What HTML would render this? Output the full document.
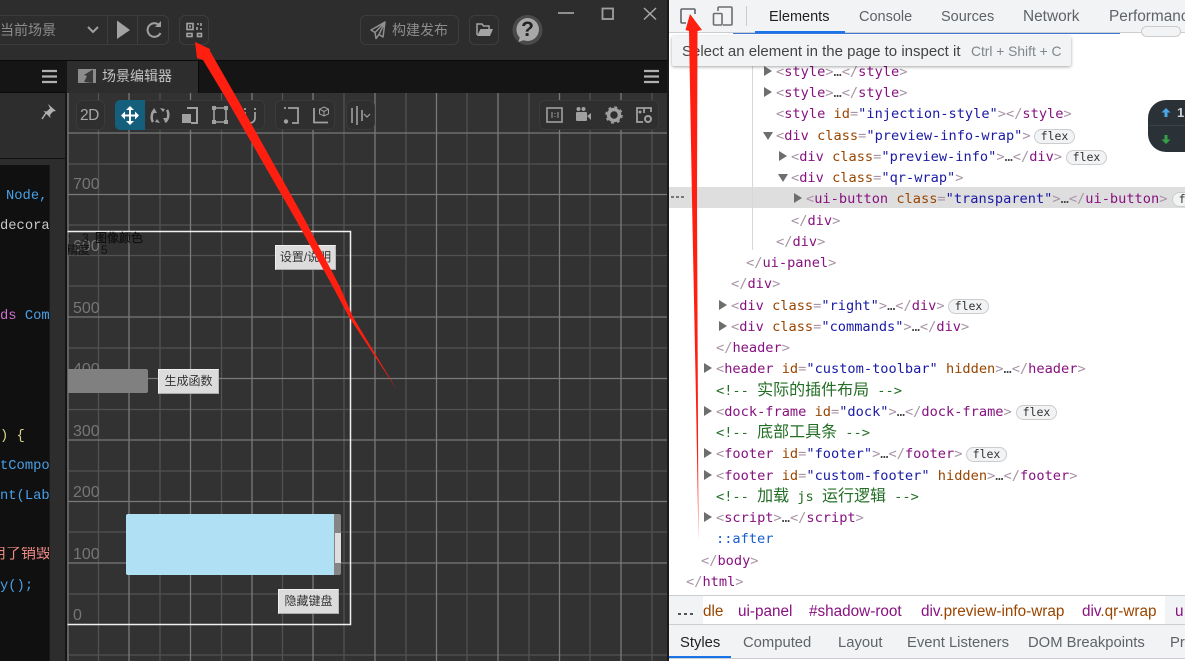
<!DOCTYPE html>
<html lang="zh"><head><meta charset="utf-8"><title>场景编辑器</title>
<style>
html,body{margin:0;padding:0;width:1185px;height:661px;overflow:hidden;background:#fff}
body{position:relative;font-family:"Liberation Sans","Noto Sans CJK SC",sans-serif}
.p{position:absolute;box-sizing:border-box}
.btn{position:absolute;box-sizing:border-box;border:1px solid #3d3d3d;border-radius:6px}
.lab{position:absolute;left:73px;font-size:16px;line-height:18px;color:#767676;margin-top:2px}
.wb{position:absolute;box-sizing:border-box;background:#dcdcdc;border:1px solid #eee;border-right-color:#bbb;border-bottom-color:#aaa;color:#333;font-size:12px;line-height:23px;text-align:center;height:25px;width:61px}
.code{position:absolute;left:0;width:49px;overflow:hidden;white-space:pre;font:13.8px/16px "Liberation Mono","Noto Sans CJK SC",monospace;color:#4a9fe6;margin-top:2px}
.l{position:absolute;white-space:pre;font:13.65px/21px "DejaVu Sans Mono","Noto Sans CJK SC",monospace;color:#881280;height:21px;margin-top:1px}
.l b{font-weight:400;color:#a894a6}.l i{font-style:normal;color:#994500}.l u{text-decoration:none;color:#1a1aa6}.l s{text-decoration:none;color:#236e25}
.l em{font-style:normal;font-size:16px;line-height:1}.l q{quotes:none;color:#444}
.f{display:inline-block;box-sizing:border-box;position:absolute;height:15px;width:41px;border:1px solid #ccc;border-radius:8px;background:#f1f3f4;color:#333;font:11.5px/13px "DejaVu Sans Mono",monospace;text-align:center;margin-top:1px}
.tw{position:absolute;width:0;height:0;border-style:solid;border-color:transparent;margin-top:1px}
.r{border-width:5px 0 5px 8px;border-left-color:#6e6e6e}
.d{border-width:8px 5px 0 5px;border-top-color:#6e6e6e}
.tab{position:absolute;font-size:14.5px;line-height:18px;color:#5f6368;white-space:pre}
.bc{font-size:15.3px;margin-top:1px}
.lt{font-size:14.8px;margin-top:1px}
</style></head><body>

<!-- left dark app -->
<div class="p" style="left:0;top:0;width:668px;height:661px;background:#2d2d2d"></div>
<div class="p" style="left:0;top:60px;width:667px;height:1px;background:#0a0a0a"></div>
<div class="p" style="left:0;top:61px;width:667px;height:32px;background:#151515"></div>
<div class="p" style="left:67px;top:61px;width:132px;height:32px;background:#2d2d2d;border-right:1px solid #0a0a0a"></div>
<div class="p" style="left:65px;top:61px;width:2px;height:600px;background:#161616"></div>
<div class="p" style="left:0;top:92px;width:66px;height:1px;background:#0a0a0a"></div>
<div class="p" style="left:0;top:158px;width:65px;height:1px;background:#111"></div>
<div class="p" style="left:0;top:165px;width:50px;height:496px;background:#101010;border-right:1px solid #1a1a1a"></div>

<!-- top toolbar -->
<div class="btn" style="left:-10px;top:15px;width:179px;height:30px"></div>
<div class="p" style="left:107px;top:15px;width:1px;height:30px;background:#3d3d3d"></div>
<div class="p" style="left:137px;top:15px;width:1px;height:30px;background:#3d3d3d"></div>
<div class="p" style="left:0;top:20px;font-size:14px;line-height:20px;color:#8c8c8c;white-space:pre">当前场景</div>
<svg class="p" style="left:0;top:0" width="668" height="60" fill="none">
<path d="M88 27l5 5 5-5" stroke="#a0a0a0" stroke-width="2"/>
<path d="M117 20.500L130 30L117 39Z" fill="#a3a3a3"/>
<path d="M159.500 25.500A6.800 6.800 0 1 0 160.500 33" stroke="#a0a0a0" stroke-width="2"/><path d="M161 21v6h-6z" fill="#a0a0a0"/>
<g stroke="#a3a3a3" stroke-width="1.600">
<rect x="187" y="23.500" width="6" height="6"/>
<path d="M197 24h2M201 23v3M197 27v3M200 29h2"/>
<rect x="187" y="33.500" width="5" height="3"/>
<rect x="197.500" y="33.500" width="4" height="3"/>
</g>
<rect x="189" y="25.500" width="2" height="2" fill="#a3a3a3"/>
<path d="M385 22L371 30l4 2.500 1 6 3-4 4 2.500zM375 32.500L385 22l-6 12.500" stroke="#8f8f8f" stroke-width="1.500" stroke-linejoin="round"/>
<path d="M477 35V24h5l1.500 2h5.500v3" stroke="#a3a3a3" stroke-width="1.500"/><path d="M477 36l3.500-7H493l-3 7z" fill="#a3a3a3"/>
<circle cx="527.500" cy="30" r="15" fill="#4a4a4a"/>
<path d="M527.500 18a11.500 11.500 0 1 1-4 22.300l-5 1.700 1.200-4.500A11.500 11.500 0 0 1 527.500 18z" fill="#a8a8a8"/>
<path d="M558 13h16" stroke="#8f8f8f" stroke-width="2"/>
<rect x="602.500" y="8.500" width="10.500" height="10.500" stroke="#a0a0a0" stroke-width="1.800"/>
<path d="M644 8l12 11.500M656 8L644 19.500" stroke="#a8a8a8" stroke-width="1.500"/>
</svg>
<div class="p" style="left:520px;top:18px;width:15px;text-align:center;font-size:21px;line-height:24px;font-weight:700;color:#222">?</div>
<div class="btn" style="left:179px;top:15px;width:30px;height:30px"></div>
<div class="btn" style="left:360px;top:15px;width:99px;height:30px"></div>
<div class="p" style="left:392px;top:20px;font-size:14px;line-height:20px;color:#8c8c8c;white-space:pre">构建发布</div>
<div class="btn" style="left:469px;top:15px;width:30px;height:30px"></div>

<!-- tabs -->
<svg class="p" style="left:0;top:60px" width="668" height="35" fill="none">
<path d="M42 11h15M42 16.500h15M42 22h15M644 11h15M644 16.500h15M644 22h15" stroke="#b0b0b0" stroke-width="2.200"/>
<rect x="78" y="9" width="18" height="14" fill="#8c8c8c"/><path d="M84 22l3-6-3-1 8-5 1 0v13z" fill="#3a3a3a"/>
</svg>
<div class="p" style="left:102px;top:67px;font-size:14px;line-height:18px;color:#c4c4c4;white-space:pre">场景编辑器</div>

<!-- scene grid -->
<div class="p" style="left:67px;top:93px;width:600px;height:568px;background:#323232;overflow:hidden"></div>
<svg class="p" style="left:0;top:0" width="668" height="661" fill="none">
<g stroke="#525252" stroke-width="1.300">
<path d="M98.500 93V661M160 93V661M221.500 93V661M282.500 93V661M344 93V661M406 93V661M467 93V661M529 93V661M590 93V661M652 93V661"/>
<path d="M68 164H667M68 225H667M68 255.500H667M68 286H667M68 348H667M68 409.500H667M68 471H667M68 532H667M68 594H667M68 655H667"/>
</g>
<g stroke="#7a7a7a" stroke-width="1.300">
<path d="M68 93V661M129 93V661M190.500 93V661M252 93V661M313 93V661M375 93V661M436.500 93V661M498 93V661M559.500 93V661M621 93V661"/>
<path d="M68 133H667M68 194.500H667M68 317H667M68 378.500H667M68 440H667M68 501.500H667M68 563H667"/>
</g>
<path d="M67.500 231.500H350.500V624.500H67.500" stroke="#f0f0f0" stroke-width="1.500"/>
</svg>
<div class="lab" style="top:174px">700</div>
<div class="lab" style="top:236px">600</div>
<div class="lab" style="top:298px">500</div>
<div class="lab" style="top:359px">400</div>
<div class="lab" style="top:421px">300</div>
<div class="lab" style="top:482px">200</div>
<div class="lab" style="top:544px">100</div>
<div class="lab" style="top:605px">0</div>

<div class="p" style="left:68px;top:231px;font-size:12px;line-height:14px;color:#111;white-space:pre">:</div>
<div class="p" style="left:82px;top:231px;font-size:12px;line-height:14px;color:#111;white-space:pre">3</div>
<div class="p" style="left:95px;top:231px;font-size:12px;line-height:14px;color:#111;white-space:pre;-webkit-text-stroke:.3px #111">图像颜色</div>
<div class="p" style="left:68px;top:243px;width:24px;overflow:hidden;font-size:12px;line-height:14px;color:#111;white-space:pre"><span style="margin-left:-2px">精度：</span></div>
<div class="p" style="left:101px;top:243px;font-size:12px;line-height:14px;color:#111;white-space:pre">5</div>

<div class="p" style="left:68px;top:369px;width:80px;height:24px;background:#808080;border-radius:0 2px 2px 0"></div>
<div class="wb" style="left:158px;top:369px">生成函数</div>
<div class="wb" style="left:275px;top:245px">设置/说明</div>
<div class="wb" style="left:278px;top:589px">隐藏键盘</div>
<div class="p" style="left:126px;top:514px;width:208px;height:61px;background:#b0e0f3;border-radius:2px 0 0 2px"></div>
<div class="p" style="left:334px;top:514px;width:7px;height:61px;background:#858585;border-radius:0 2px 2px 0"></div>
<div class="p" style="left:335px;top:533px;width:6px;height:30px;background:#dedede"></div>

<!-- scene toolbar -->
<div class="p" style="left:76px;top:100px;width:29px;height:30px;background:#2f2f2f;border:1px solid #3a3a3a;border-radius:6px"></div>
<div class="p" style="left:115px;top:100px;width:150px;height:30px;background:#2f2f2f;border:1px solid #3a3a3a;border-radius:6px"></div>
<div class="p" style="left:115px;top:100px;width:30px;height:30px;background:#14607c;border-radius:5px 0 0 5px"></div>
<div class="p" style="left:275px;top:100px;width:60px;height:30px;background:#2f2f2f;border:1px solid #3a3a3a;border-radius:6px"></div>
<div class="p" style="left:346px;top:100px;width:29px;height:30px;background:#2f2f2f;border:1px solid #3a3a3a;border-radius:6px"></div>
<div class="p" style="left:539px;top:100px;width:120px;height:30px;background:#2f2f2f;border:1px solid #3a3a3a;border-radius:6px"></div>
<div class="p" style="left:80px;top:106px;font-size:15.5px;line-height:20px;letter-spacing:-.5px;color:#a8a8a8">2D</div>
<svg class="p" style="left:0;top:97px" width="668" height="41" fill="none">
<g fill="#fff" transform="translate(1,0)"><path d="M129 9l-4 4h8zM129 28l-4-4h8zM120 18.500l4-4v8zM138 18.500l-4-4v8z"/><path d="M121 17.500h16v2h-16z"/><path d="M128 11h2v15h-2z"/></g>
<path d="M153 25c-2-3-2-9 2-12M167 13c2 3 2 9-2 12" stroke="#a0a0a0" stroke-width="2.500"/><path d="M151 16l3-5 3 5zM169 21l-3 5-3-5zM160 11l5 1-2 3zM160 26l-5-1 2-3z" fill="#a0a0a0"/>
<path d="M187 11h10v15h-6" stroke="#a0a0a0" stroke-width="2"/><rect x="182" y="17" width="9" height="9" fill="#a0a0a0"/>
<path d="M214 11h12M214 25h12M214 11v14M226 11v14" stroke="#a0a0a0" stroke-width="1.600"/><path d="M212 9h4v4h-4zM224 9h4v4h-4zM212 23h4v4h-4zM224 23h4v4h-4z" fill="#a0a0a0"/>
<path d="M245 15v6a5 5 0 0 0 10 0v-6" stroke="#a0a0a0" stroke-width="1.800"/><path d="M245 11v2M255 11v2" stroke="#a0a0a0" stroke-width="1.800"/>
<path d="M288 11h10v15h-6" stroke="#a0a0a0" stroke-width="1.800"/><path d="M284 11h2" stroke="#a0a0a0" stroke-width="1.800"/><circle cx="286" cy="24.500" r="2.200" fill="#a0a0a0"/>
<path d="M314 11v14.500h14" stroke="#a0a0a0" stroke-width="1.800"/><path d="M324 10l4.500 2.200v4.600l-4.500 2.200-4.500-2.200v-4.600zM319.500 12.200l4.500 2.300 4.500-2.300M324 14.500v4.500" stroke="#a0a0a0" stroke-width="1"/>
<path d="M352 11v15M357 9v19M362 13v11" stroke="#a0a0a0" stroke-width="1.600"/><path d="M364 17l3 3 3-3" stroke="#a0a0a0" stroke-width="1.200"/>
<rect x="547" y="11" width="15" height="14" stroke="#a0a0a0" stroke-width="1.600"/><path d="M552 15v6M558 15v6M555 16v1M555 19v1" stroke="#a0a0a0"/>
<rect x="576" y="15" width="11" height="9" rx="1" fill="#a0a0a0"/><circle cx="578.500" cy="12" r="2" fill="#a0a0a0"/><circle cx="583.500" cy="12" r="2" fill="#a0a0a0"/><path d="M587 19l4-3v7z" fill="#a0a0a0"/>
<circle cx="614" cy="18" r="5.500" stroke="#a0a0a0" stroke-width="3.500"/><circle cx="614" cy="18" r="8" stroke="#a0a0a0" stroke-width="1.500" stroke-dasharray="3 3.300"/>
<path d="M644 16v-5h-7v14h6M644 11h7v4" stroke="#a0a0a0" stroke-width="1.800"/><circle cx="640" cy="15" r="1.500" fill="#a0a0a0"/><circle cx="648" cy="22" r="3" stroke="#a0a0a0" stroke-width="2"/>
</svg>
<svg class="p" style="left:40px;top:102px" width="20" height="20" fill="none"><path d="M8 2l8 7-3 .5-3 3.500.5 3-7-7 3 .5 3.500-3z" fill="#b0b0b0"/><path d="M6 11l-4 6" stroke="#b0b0b0" stroke-width="1.500"/></svg>

<!-- code -->
<div class="code" style="top:187px;padding-left:6px;box-sizing:border-box">Node,</div>
<div class="code" style="top:217px;color:#c8c8c8">decora</div>
<div class="code" style="top:307px"><span style="color:#d070d0">ds</span> Com</div>
<div class="code" style="top:427px;color:#dcd38a">) {</div>
<div class="code" style="top:457px">tCompo</div>
<div class="code" style="top:487px">nt(Lab</div>
<div class="code" style="top:545px;color:#ee8a85;left:-9px;width:58px;font-size:15px">用了销毁</div>
<div class="code" style="top:577px">y();</div>

<!-- devtools -->
<div class="p" style="left:667px;top:0;width:2px;height:661px;background:#1a1a1a"></div>
<div class="p" style="left:669px;top:0;width:516px;height:33px;background:#f1f3f4;border-bottom:1px solid #cbcdd1"></div>
<div class="p" style="left:755px;top:31px;width:90px;height:2px;background:#1a73e8"></div>
<div class="p" style="left:733px;top:33px;width:387px;height:1px;background:#3b78d8"></div>
<div class="p" style="left:1141px;top:26px;width:40px;height:11px;border:1px solid #ccc;border-radius:6px;background:#f1f3f4"></div>
<div class="p" style="left:746px;top:6px;width:1px;height:20px;background:#ccc"></div>
<svg class="p" style="left:669px;top:0" width="90" height="33" fill="none">
<path d="M17 23h-4a1 1 0 0 1-1-1V10a1 1 0 0 1 1-1h12a1 1 0 0 1 1 1v4" stroke="#5f6368" stroke-width="1.600"/>
<path d="M49 11v-3a1 1 0 0 1 1-1h12a1 1 0 0 1 1 1v16a1 1 0 0 1-1 1H54" stroke="#6e6e6e" stroke-width="1.600"/><rect x="44.500" y="13.500" width="8.500" height="11.500" rx="1" stroke="#6e6e6e" stroke-width="1.600"/>
</svg>
<div class="tab" style="left:769px;top:8px;color:#202124">Elements</div>
<div class="tab" style="left:859px;top:8px">Console</div>
<div class="tab" style="left:941px;top:8px">Sources</div>
<div class="tab" style="left:1023px;top:8px;font-size:15.4px">Network</div>
<div class="tab" style="left:1109px;top:8px;font-size:15.4px">Performance</div>

<div class="p" style="left:669px;top:187px;width:516px;height:21px;background:#dedede"></div>
<div class="p" style="left:752px;top:66px;width:1px;height:184px;background:#d8d8d8"></div>
<div class="p" style="left:671px;top:196px;width:3px;height:2px;background:#777;box-shadow:5px 0 #777,10px 0 #777"></div>

<div class="tw r" style="left:764px;top:65px"></div><div class="l" style="left:776px;top:61px"><b>&lt;</b>style<b>&gt;</b><q>…</q><b>&lt;/</b>style<b>&gt;</b></div>
<div class="tw r" style="left:764px;top:86px"></div><div class="l" style="left:776px;top:82px"><b>&lt;</b>style<b>&gt;</b><q>…</q><b>&lt;/</b>style<b>&gt;</b></div>
<div class="l" style="left:776px;top:103px"><b>&lt;</b>style <i>id</i><b>=</b><u>"injection-style"</u><b>&gt;&lt;/</b>style<b>&gt;</b></div>
<div class="tw d" style="left:763px;top:131px"></div><div class="l" style="left:776px;top:125px"><b>&lt;</b>div <i>class</i><b>=</b><u>"preview-info-wrap"</u><b>&gt;</b></div>
<div class="f" style="left:1034px;top:128px">flex</div>
<div class="tw r" style="left:779px;top:150px"></div><div class="l" style="left:791px;top:146px"><b>&lt;</b>div <i>class</i><b>=</b><u>"preview-info"</u><b>&gt;</b><q>…</q><b>&lt;/</b>div<b>&gt;</b></div>
<div class="f" style="left:1066px;top:149px">flex</div>
<div class="tw d" style="left:778px;top:173px"></div><div class="l" style="left:791px;top:167px"><b>&lt;</b>div <i>class</i><b>=</b><u>"qr-wrap"</u><b>&gt;</b></div>
<div class="tw r" style="left:794px;top:192px"></div><div class="l" style="left:806px;top:188px"><b>&lt;</b>ui-button <i>class</i><b>=</b><u>"transparent"</u><b>&gt;</b><q>…</q><b>&lt;/</b>ui-button<b>&gt;</b></div>
<div class="f" style="left:1172px;top:191px">flex</div>
<div class="l" style="left:791px;top:210px"><b>&lt;/</b>div<b>&gt;</b></div>
<div class="l" style="left:776px;top:231px"><b>&lt;/</b>div<b>&gt;</b></div>
<div class="l" style="left:746px;top:252px"><b>&lt;/</b>ui-panel<b>&gt;</b></div>
<div class="l" style="left:731px;top:273px"><b>&lt;/</b>div<b>&gt;</b></div>
<div class="tw r" style="left:719px;top:299px"></div><div class="l" style="left:731px;top:295px"><b>&lt;</b>div <i>class</i><b>=</b><u>"right"</u><b>&gt;</b><q>…</q><b>&lt;/</b>div<b>&gt;</b></div>
<div class="f" style="left:948px;top:298px">flex</div>
<div class="tw r" style="left:719px;top:320px"></div><div class="l" style="left:731px;top:316px"><b>&lt;</b>div <i>class</i><b>=</b><u>"commands"</u><b>&gt;</b><q>…</q><b>&lt;/</b>div<b>&gt;</b></div>
<div class="l" style="left:716px;top:337px"><b>&lt;/</b>header<b>&gt;</b></div>
<div class="tw r" style="left:704px;top:362px"></div><div class="l" style="left:716px;top:358px"><b>&lt;</b>header <i>id</i><b>=</b><u>"custom-toolbar"</u> <i>hidden</i><b>&gt;</b><q>…</q><b>&lt;/</b>header<b>&gt;</b></div>
<div class="l" style="left:716px;top:380px"><s>&lt;!-- <em>实际的插件布局</em> --&gt;</s></div>
<div class="tw r" style="left:704px;top:405px"></div><div class="l" style="left:716px;top:401px"><b>&lt;</b>dock-frame <i>id</i><b>=</b><u>"dock"</u><b>&gt;</b><q>…</q><b>&lt;/</b>dock-frame<b>&gt;</b></div>
<div class="f" style="left:1016px;top:404px">flex</div>
<div class="l" style="left:716px;top:422px"><s>&lt;!-- <em>底部工具条</em> --&gt;</s></div>
<div class="tw r" style="left:704px;top:447px"></div><div class="l" style="left:716px;top:443px"><b>&lt;</b>footer <i>id</i><b>=</b><u>"footer"</u><b>&gt;</b><q>…</q><b>&lt;/</b>footer<b>&gt;</b></div>
<div class="f" style="left:966px;top:446px">flex</div>
<div class="tw r" style="left:704px;top:469px"></div><div class="l" style="left:716px;top:465px"><b>&lt;</b>footer <i>id</i><b>=</b><u>"custom-footer"</u> <i>hidden</i><b>&gt;</b><q>…</q><b>&lt;/</b>footer<b>&gt;</b></div>
<div class="l" style="left:716px;top:486px"><s>&lt;!-- <em>加载</em> js <em>运行逻辑</em> --&gt;</s></div>
<div class="tw r" style="left:704px;top:511px"></div><div class="l" style="left:716px;top:507px"><b>&lt;</b>script<b>&gt;</b><q>…</q><b>&lt;/</b>script<b>&gt;</b></div>
<div class="l" style="left:716px;top:528px;color:#1a5fd0">::after</div>
<div class="l" style="left:701px;top:550px"><b>&lt;/</b>body<b>&gt;</b></div>
<div class="l" style="left:686px;top:571px"><b>&lt;/</b>html<b>&gt;</b></div>

<!-- floating widget -->
<div class="p" style="left:1148px;top:100px;width:50px;height:52px;background:#2a3238;border-radius:18px 0 0 18px"></div>
<div class="p" style="left:1149px;top:125px;width:40px;height:1px;background:#3a434a"></div>
<div class="p" style="left:1177px;top:104px;font-size:13px;line-height:18px;font-weight:700;color:#cfd4d8">1</div>
<svg class="p" style="left:1158px;top:105px" width="16" height="42"><path d="M8 3l4.500 4.500h-3V12h-3V7.500h-3z" fill="#4aa8e8"/><path d="M8 39l4.500-4.500h-3V30h-3v4.500h-3z" fill="#35a045"/></svg>

<!-- tooltip -->
<div class="p" style="left:672px;top:36px;width:399px;height:30px;background:#f1f3f4;border-radius:2px;box-shadow:0 1px 3px rgba(0,0,0,.35)"></div>
<div class="tab" style="left:682px;top:43px;font-size:15px;color:#444;white-space:pre">Select an element in the page to inspect it</div>
<div class="tab" style="left:971px;top:43px;font-size:13.8px;color:#80868b;white-space:pre">Ctrl + Shift + C</div>

<!-- breadcrumb -->
<div class="p" style="left:669px;top:595px;width:516px;height:1px;background:#ccc"></div>
<div class="p" style="left:669px;top:596px;width:34px;height:28px;background:#f1f3f4"></div>
<div class="p" style="left:1165px;top:596px;width:20px;height:28px;background:#f1f3f4"></div>
<div class="p" style="left:678px;top:613px;width:3px;height:2px;background:#555;box-shadow:6px 0 #555,12px 0 #555"></div>
<div class="tab bc" style="left:703px;top:602px;color:#994500">dle</div>
<div class="tab bc" style="left:738px;top:602px;color:#881280">ui-panel</div>
<div class="tab bc" style="left:809px;top:602px;color:#881280">#shadow-root</div>
<div class="tab bc" style="left:921px;top:602px;color:#881280">div<span style="color:#994500">.preview-info-wrap</span></div>
<div class="tab bc" style="left:1082px;top:602px;color:#881280">div<span style="color:#994500">.qr-wrap</span></div>
<div class="tab bc" style="left:1175px;top:602px;color:#881280">u</div>
<div class="p" style="left:669px;top:624px;width:516px;height:35px;background:#f1f3f4;border-top:1px solid #cbcdd1;border-bottom:1px solid #cbcdd1"></div>
<div class="p" style="left:669px;top:656px;width:62px;height:2px;background:#1a73e8"></div>
<div class="tab lt" style="left:680px;top:633px;color:#202124">Styles</div>
<div class="tab lt" style="left:743px;top:633px">Computed</div>
<div class="tab lt" style="left:838px;top:633px">Layout</div>
<div class="tab lt" style="left:907px;top:633px">Event Listeners</div>
<div class="tab lt" style="left:1028px;top:633px">DOM Breakpoints</div>
<div class="tab lt" style="left:1170px;top:633px">Properties</div>

<!-- red arrows -->
<svg class="p" style="left:0;top:0" width="1185" height="661">
<path d="M195 42L210 49 210 51 238 100 305 220 340 287 353 317 397 390 349 317 333 287 296 220 227 100 203 60 197 58Z" fill="#ff1f10"/>
<path d="M690 14L702 30 697.500 31 697 200 698.500 541 696 400 692 200 689 31 685.500 30Z" fill="#ff1f10"/>
</svg>
</body></html>
